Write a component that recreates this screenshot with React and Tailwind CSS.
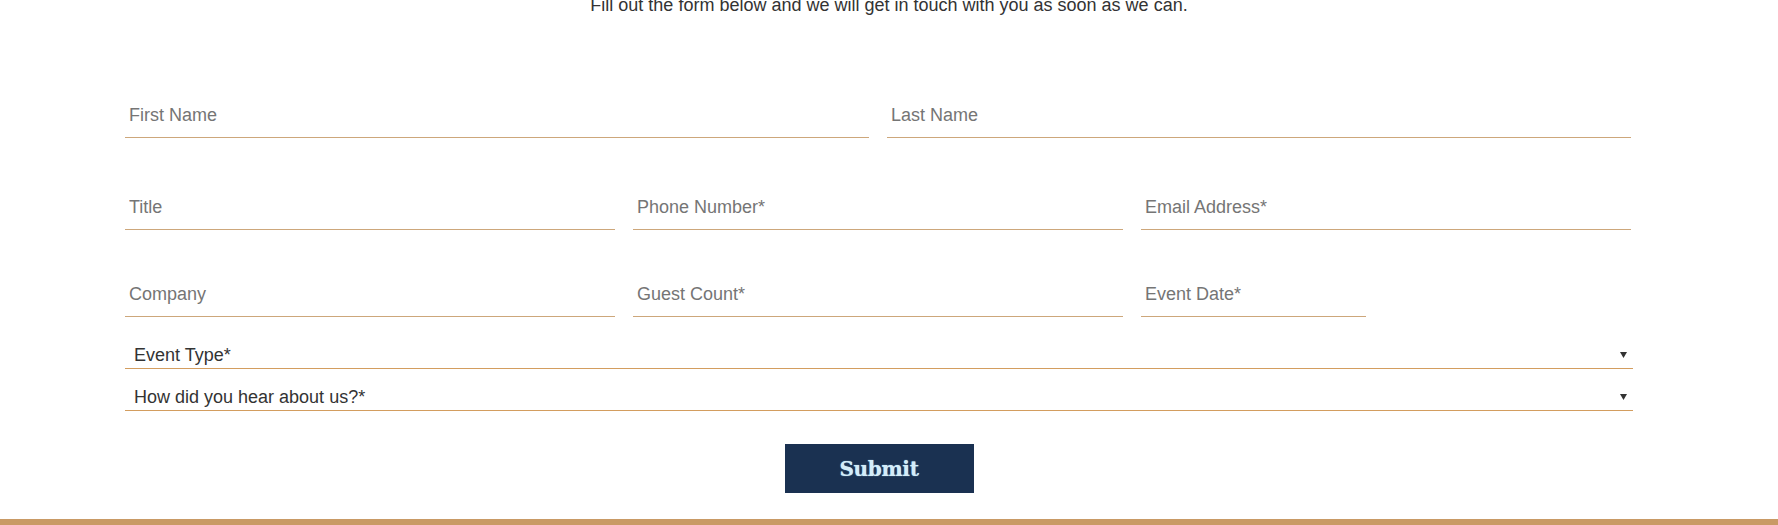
import React from "react";

function Field({ placeholder }) {
  return (
    <input
      type="text"
      placeholder={placeholder}
      className="block h-[46px] w-full border-b border-[#cda77b] bg-transparent px-[4px] pt-[2px] text-[18px] text-[#333] outline-none placeholder:text-[#757575]"
    />
  );
}

function SelectField({ label, className = "" }) {
  return (
    <div className={"relative h-[28px] w-full " + className}>
      <select
        defaultValue=""
        className="block h-[28px] w-full appearance-none border-b border-[#d39d5f] bg-transparent pl-[9px] pt-[1px] text-[18px] leading-[27px] text-[#333] outline-none"
      >
        <option value="" disabled>
          {label}
        </option>
      </select>
      <svg
        className="pointer-events-none absolute right-[6px] top-[11px]"
        width="7"
        height="6"
        viewBox="0 0 7 6"
      >
        <polygon points="0,0 7,0 3.5,6" fill="#333" />
      </svg>
    </div>
  );
}

export default function App() {
  return (
    <div className="flex w-full flex-col bg-white font-['Liberation_Sans',Arial,sans-serif]">
      <p className="-mt-[4px] text-center text-[18px] leading-[18px] text-[#333]">
        Fill out the form below and we will get in touch with you as soon as we can.
      </p>

      <form className="ml-[125px] mt-[78px] flex w-[1508px] flex-col">
        <div className="grid w-[1506px] grid-cols-2 gap-x-[18px]">
          <Field placeholder="First Name" />
          <Field placeholder="Last Name" />
        </div>

        <div className="mt-[46px] grid w-[1506px] grid-cols-3 gap-x-[18px]">
          <Field placeholder="Title" />
          <Field placeholder="Phone Number*" />
          <Field placeholder="Email Address*" />
        </div>

        <div className="mt-[41px] grid w-[1506px] grid-cols-3 gap-x-[18px]">
          <Field placeholder="Company" />
          <Field placeholder="Guest Count*" />
          <div className="w-[225px]">
            <Field placeholder="Event Date*" />
          </div>
        </div>

        <SelectField label="Event Type*" className="mt-[24px]" />
        <SelectField label="How did you hear about us?*" className="mt-[14px]" />

        <button
          type="button"
          className="mt-[33px] h-[49px] w-[189px] self-center bg-[#1a3151] font-['DejaVu_Serif',serif] text-[20px] font-bold tracking-[-0.3px] text-[#d4ecf8] [text-shadow:0_0_1px_#9fd4f0]"
        >
          Submit
        </button>
      </form>

      <div className="mt-[26px] h-[20px] w-full bg-[#c99a65]" />
    </div>
  );
}
